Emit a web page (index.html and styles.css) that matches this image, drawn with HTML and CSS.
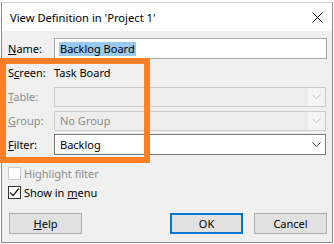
FILE: index.html
```html
<!DOCTYPE html>
<html lang="en">
<head>
    <meta charset="UTF-8">
    <title>View Definition</title>
    <link rel="stylesheet" href="styles.css">
</head>
<body>
    <div class="window">
        <div class="titlebar">
            <span class="title">View Definition in 'Project 1'</span>
            <svg class="close" width="11" height="11" viewBox="0 0 11 11">
                <path d="M0.5 0.5 L10.5 10.5 M10.5 0.5 L0.5 10.5" stroke="#000" stroke-width="1" fill="none"/>
            </svg>
        </div>

        <div class="content">
            <div class="fields">
                <div class="row">
                    <label><u>N</u>ame:</label>
                    <div class="textbox"><span class="selected">Backlog Board</span></div>
                </div>
                <div class="row">
                    <label>S<u>c</u>reen:</label>
                    <span class="value">Task Board</span>
                </div>
                <div class="row disabled">
                    <label><u>T</u>able:</label>
                    <div class="combo">
                        <span class="combo-text"></span>
                        <span class="arrow"><svg width="9" height="5" viewBox="0 0 9 5"><path d="M0.5 0.5 L4.5 4.5 L8.5 0.5" stroke="#c4c4c4" fill="none"/></svg></span>
                    </div>
                </div>
                <div class="row disabled">
                    <label><u>G</u>roup:</label>
                    <div class="combo">
                        <span class="combo-text">No Group</span>
                        <span class="arrow"><svg width="9" height="5" viewBox="0 0 9 5"><path d="M0.5 0.5 L4.5 4.5 L8.5 0.5" stroke="#c4c4c4" fill="none"/></svg></span>
                    </div>
                </div>
                <div class="row">
                    <label><u>F</u>ilter:</label>
                    <div class="combo active">
                        <span class="combo-text">Backlog</span>
                        <span class="arrow"><svg width="9" height="5" viewBox="0 0 9 5"><path d="M0.5 0.5 L4.5 4.5 L8.5 0.5" stroke="#333" fill="none"/></svg></span>
                    </div>
                </div>
            </div>

            <div class="checks">
                <div class="check disabled">
                    <span class="box"></span>
                    <span>Hi<u>g</u>hlight filter</span>
                </div>
                <div class="check">
                    <span class="box">
                        <svg width="11" height="11" viewBox="0 0 11 11"><path d="M1 5.5 L4 8.5 L10 1.5" stroke="#222" stroke-width="1.2" fill="none"/></svg>
                    </span>
                    <span>Show in <u>m</u>enu</span>
                </div>
            </div>

            <div class="buttons">
                <button class="btn"><u>H</u>elp</button>
                <div class="right-buttons">
                    <button class="btn default">OK</button>
                    <button class="btn">Cancel</button>
                </div>
            </div>

            <!-- annotation box drawn over the dialog -->
            <div class="highlight-box"></div>
        </div>
    </div>
</body>
</html>
```

FILE: styles.css
```css
body {
    margin: 0;
    background: #fff;
    font-family: 'Noto Sans', 'Segoe UI', sans-serif;
    font-size: 11px;
    color: #000;
}

.window {
    margin: 2px 0 0 1px;
    width: 332px;
    height: 241px;
    box-sizing: border-box;
    border: 1px solid #8c8c8c;
    border-top-color: #d0d0d0;
    display: flex;
    flex-direction: column;
}

.titlebar {
    height: 28px;
    background: #fff;
    display: flex;
    align-items: center;
    justify-content: space-between;
    padding: 0 9px 0 8px;
}

.title {
    font-size: 11.2px;
    margin-top: 1px;
}

.content {
    position: relative;
    flex: 1;
    background: #f0f0f0;
    padding: 7px 5px 0 6px;
}

.fields {
    display: flex;
    flex-direction: column;
    gap: 3px;
}

.row {
    display: flex;
    align-items: center;
    height: 21px;
}

.row label {
    width: 46px;
    flex-shrink: 0;
}

.row.disabled label,
.row.disabled .combo-text {
    color: #8d8d8d;
}

.textbox {
    flex: 1;
    height: 21px;
    box-sizing: border-box;
    border: 1px solid #a8a8a8;
    background: #fff;
    display: flex;
    align-items: center;
    padding-left: 4px;
}

.selected {
    background: #99c9ef;
    padding: 0 1px;
    line-height: 14px;
}

.combo {
    flex: 1;
    margin-right: 1px;
    height: 20px;
    box-sizing: border-box;
    border: 1px solid #cccccc;
    background: #ededed;
    display: flex;
    align-items: center;
}

.combo.active {
    height: 21px;
    border-color: #7a7a7a;
    background: #fff;
}

.combo-text {
    flex: 1;
    padding-left: 5px;
}

.arrow {
    width: 17px;
    height: 100%;
    display: flex;
    align-items: center;
    justify-content: center;
    background: #f4f4f4;
}

.combo.active .arrow {
    background: #fff;
}

.checks {
    margin-top: 12px;
    display: flex;
    flex-direction: column;
    gap: 6px;
}

.check {
    display: flex;
    align-items: center;
    gap: 3px;
    height: 13px;
}

.check.disabled {
    color: #8d8d8d;
}

.box {
    width: 13px;
    height: 13px;
    box-sizing: border-box;
    border: 1px solid #333;
    background: #fff;
    display: flex;
    align-items: center;
    justify-content: center;
}

.check.disabled .box {
    border-color: #cccccc;
}

.buttons {
    margin-top: 14px;
    display: flex;
    justify-content: space-between;
    padding-left: 1px;
}

.right-buttons {
    display: flex;
    gap: 11px;
}

.btn {
    width: 73px;
    height: 21px;
    box-sizing: border-box;
    border: 1px solid #adadad;
    background: #e1e1e1;
    font-family: inherit;
    font-size: 11px;
    color: #000;
    padding: 0;
}

.btn.default {
    border: 2px solid #0078d7;
}

.highlight-box {
    position: absolute;
    left: -2px;
    top: 27px;
    width: 150px;
    height: 105px;
    box-sizing: border-box;
    border: 6px solid #ff7f27;
}
```
